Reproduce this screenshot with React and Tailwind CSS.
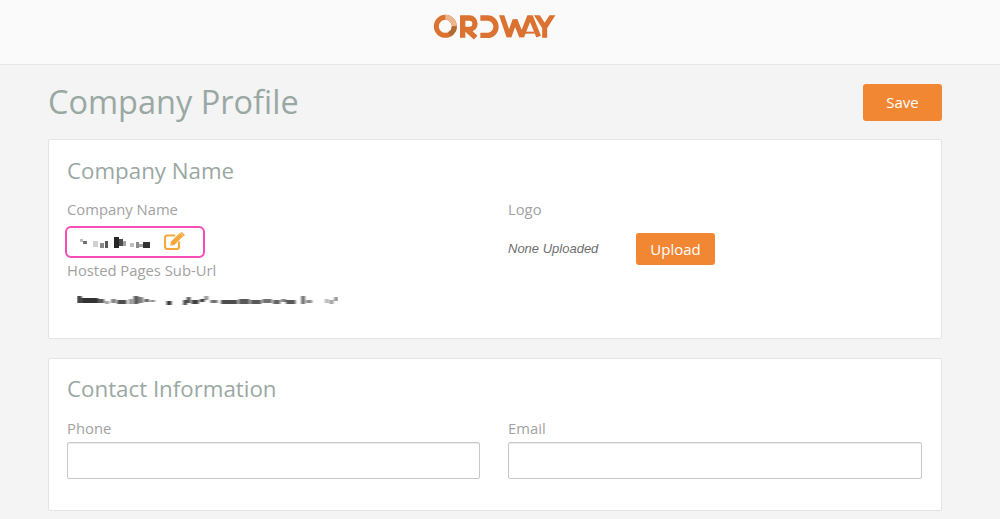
const F = { fontFamily: '"Open Sans", sans-serif' };

function Logo() {
  return (
    <svg width="150" height="70" viewBox="0 0 450 210" className="block">
      <clipPath id="lc"><rect x="230" y="46" width="190" height="67" /></clipPath>
      <filter id="ls"><feGaussianBlur stdDeviation="0.9" /></filter>
      <g filter="url(#ls)">
        <g fill="none" stroke="#dc7230" strokeWidth="16">
          <circle cx="76" cy="79" r="27" strokeWidth="15" />
          <path d="M128 113V54h20a17 17 0 0 1 0 34h-8l27 25" />
          <path d="M181 54h22a25 26 0 0 1 0 52h-22" />
          <g clipPath="url(#lc)">
            <path d="M243 40l24 70 18-50 20 50 25-64 26 64" strokeWidth="15" strokeLinejoin="bevel" />
            <path d="M347 40l27 42 27-42M374 78v36" strokeWidth="15" />
          </g>
        </g>
        <path d="M314 98h30" stroke="#dc7230" strokeWidth="6" />
        <path d="M76 52a27 27 0 0 1 27 27" fill="none" stroke="#edb48e" strokeWidth="15" />
        <path d="M103 79a27 27 0 0 1-15 24" fill="none" stroke="#b06a33" strokeWidth="15" />
      </g>
    </svg>
  );
}

const nameBlocks = [
  [0, 3, 3, 3, 0.25], [3, 5, 4, 3, 0.6], [13, 5, 5, 6, 0.18], [20, 7, 4, 5, 0.5], [25, 5, 3, 7, 0.7],
  [34, 1, 5, 11, 0.9], [39, 3, 4, 7, 0.75], [43, 5, 3, 5, 0.4], [50, 7, 4, 4, 0.25], [56, 6, 3, 6, 0.5],
  [63, 6, 7, 6, 0.85], [59, 8, 4, 3, 0.4],
];

const urlBlocks = [
  [0, 1, 4, 7, 0.8], [4, 3, 14, 5, 0.85], [18, 4, 5, 4, 0.7], [24, 6, 3, 3, 0.45], [29, 4, 4, 4, 0.55], [34, 5, 8, 4, 0.75],
  [44, 4, 3, 5, 0.5], [48, 1, 4, 8, 0.7], [52, 2, 4, 6, 0.55], [57, 4, 4, 3, 0.65], [62, 5, 4, 2, 0.5],
  [76, 6, 4, 4, 0.85], [90, 5, 3, 5, 0.8], [93, 2, 3, 6, 0.75], [97, 5, 6, 4, 0.8], [104, 4, 4, 3, 0.8],
  [108, 1, 3, 4, 0.5], [113, 5, 6, 3, 0.6], [122, 5, 14, 4, 0.75], [137, 4, 9, 5, 0.7], [147, 5, 9, 4, 0.7],
  [157, 4, 8, 4, 0.6], [166, 5, 6, 4, 0.65], [173, 4, 4, 3, 0.55], [177, 5, 8, 4, 0.7], [190, 1, 3, 8, 0.65],
  [194, 5, 5, 3, 0.5], [210, 4, 3, 4, 0.3], [214, 5, 3, 4, 0.45], [218, 2, 3, 4, 0.5],
];

function Mosaic({ id, width, height, vw, blocks }) {
  return (
    <svg width={width} height={height} viewBox={`0 0 ${vw} 13`} preserveAspectRatio="none" className="block">
      <filter id={id} x="-5%" y="-30%" width="110%" height="160%"><feGaussianBlur stdDeviation="0.7" /></filter>
      <g filter={`url(#${id})`}>
        {blocks.map(([x, y, w, h, o], i) => (
          <rect key={i} x={x} y={y} width={w} height={h} fill="#111" opacity={o} />
        ))}
      </g>
    </svg>
  );
}

function EditIcon() {
  return (
    <svg width="22" height="19" viewBox="0 0 22 19" fill="none" className="block">
      <path d="M15 9.500v5.300A2.200 2.200 0 0 1 12.800 17H3.200A2.200 2.200 0 0 1 1 14.800V5.700a2.200 2.200 0 0 1 2.200-2.200h8" stroke="#f5a93d" strokeWidth="2.200" />
      <path d="M7 9.500 15.800 0.900l3.300 3.300-8.700 8.700-4 .8z" fill="#f5a93d" />
      <path d="M17 0.400a1 1 0 0 1 1.400 0l2 2a1 1 0 0 1 0 1.400l-.7.7-3.400-3.400z" fill="#f5a93d" />
    </svg>
  );
}

function Label({ children }) {
  return <div className="text-[14.800px] leading-[20px] text-[#a2a2a2]">{children}</div>;
}

function Heading({ children }) {
  return <h2 className="text-[22.300px] leading-[30px] font-normal text-[#9aa8a3]">{children}</h2>;
}

function OrangeButton({ children, className }) {
  return (
    <button className={`bg-[#f28733] text-white text-[15px] rounded-[3px] ${className}`}>{children}</button>
  );
}

export default function App() {
  return (
    <div className="w-[1000px] h-[519px] overflow-hidden bg-[#f4f4f4]" style={F}>
      <header className="h-[65px] bg-[#fafafa] border-b border-[#e6e6e6] flex justify-center">
        <div className="ml-[-10px]"><Logo /></div>
      </header>
      <main className="pl-[48px] pr-[58px]">
        <div className="flex items-start justify-between h-[74px]">
          <h1 className="text-[32.500px] leading-[44px] font-normal text-[#9aa8a3] mt-[15px]">Company Profile</h1>
          <OrangeButton className="w-[79px] h-[37px] mt-[19px]">Save</OrangeButton>
        </div>
        <section className="h-[200px] bg-white border border-[#e4e4e4] rounded-[2px] pt-[16px] px-[18px]">
          <Heading>Company Name</Heading>
          <div className="grid grid-cols-[441px_1fr] mt-[13px]">
            <div>
              <Label>Company Name</Label>
              <div className="mt-[7px] ml-[-2px] w-[140px] h-[32px] border-2 border-[#fa4cb8] rounded-[6px] flex items-center pl-[13px]">
                <Mosaic id="nm" width={73} height={13} vw={73} blocks={nameBlocks} />
                <div className="ml-[11px] mb-[1px]"><EditIcon /></div>
              </div>
              <div className="mt-[2px]"><Label>Hosted Pages Sub-Url</Label></div>
              <div className="mt-[15px] ml-[10px]"><Mosaic id="url" width={261} height={13} vw={221} blocks={urlBlocks} /></div>
            </div>
            <div>
              <Label>Logo</Label>
              <div className="flex items-center mt-[14px]">
                <span className="w-[128px] text-[13px] italic text-[#6f6f6f]" style={{ fontFamily: '"Liberation Sans", sans-serif' }}>None Uploaded</span>
                <OrangeButton className="w-[79px] h-[32px]">Upload</OrangeButton>
              </div>
            </div>
          </div>
        </section>
        <section className="h-[153px] mt-[19px] bg-white border border-[#e4e4e4] rounded-[2px] pt-[15px] px-[18px]">
          <Heading>Contact Information</Heading>
          <div className="grid grid-cols-[413px_414px] gap-x-[28px] mt-[14px]">
            <div>
              <Label>Phone</Label>
              <input className="block w-full h-[37px] mt-[4px] bg-white border border-[#c8c8c8] rounded-[2px] shadow-[inset_0_1px_1px_rgba(0,0,0,0.08)]" />
            </div>
            <div>
              <Label>Email</Label>
              <input className="block w-full h-[37px] mt-[4px] bg-white border border-[#c8c8c8] rounded-[2px] shadow-[inset_0_1px_1px_rgba(0,0,0,0.08)]" />
            </div>
          </div>
        </section>
      </main>
    </div>
  );
}
